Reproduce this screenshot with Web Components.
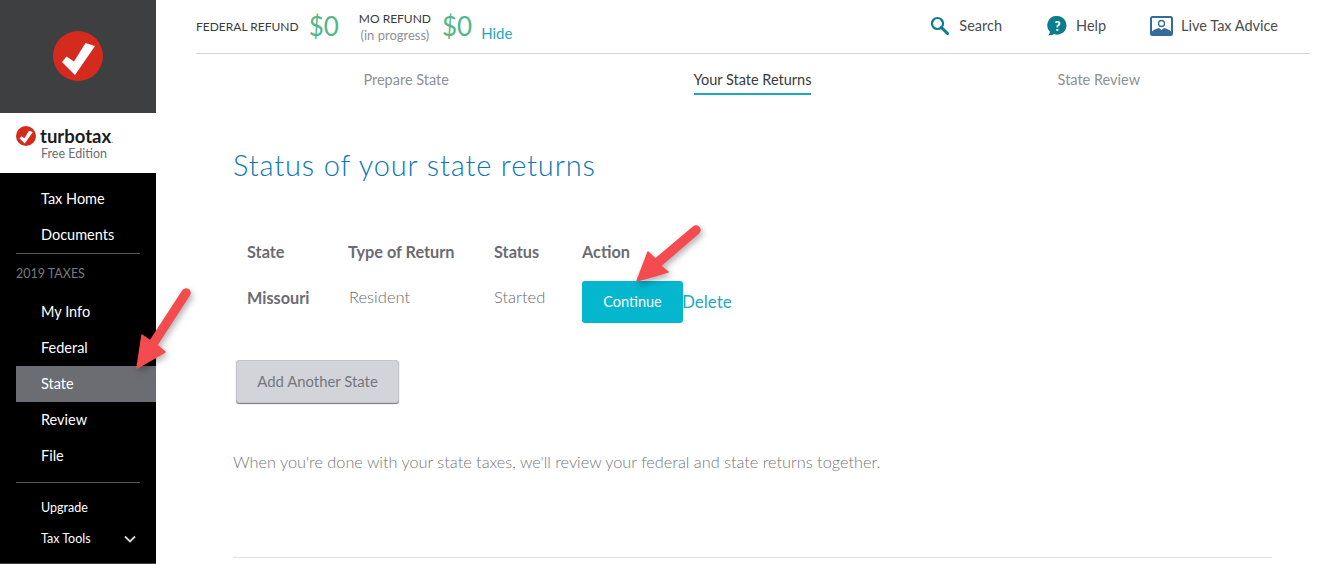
<!DOCTYPE html>
<html>
<head>
<meta charset="utf-8">
<title>Status of your state returns</title>
<style>
  html, body { margin: 0; height: 100%; background: #fff; overflow: hidden; }
  body { font-family: Lato, "Open Sans", sans-serif; }
</style>
</head>
<body>
<tt-app></tt-app>
<script>
const CHECK = `<circle cx="25" cy="25" r="25" fill="#d52b1e"/><path d="M9 31l4.500-5.500L21 30.500 32.500 12l9.500 3L22 44z" fill="#fff"/>`;

class TtNavItem extends HTMLElement {
  constructor() {
    super();
    this.attachShadow({ mode: "open" });
    this.shadowRoot.innerHTML = `
      <style>
        :host { display: flex; align-items: center; box-sizing: border-box; height: 36px; margin-left: 16px; padding: 0 0 2px 25px;
          color: #fff; font-size: 14.500px; }
        :host([active]) { background: #6b6d72; }
        :host([small]) { font-size: 12.500px; height: 31px; padding-bottom: 0; }
      </style>
      <slot></slot>`;
  }
}

class TtSidebar extends HTMLElement {
  constructor() {
    super();
    this.attachShadow({ mode: "open" });
    this.shadowRoot.innerHTML = `
      <style>
        :host { display: flex; flex-direction: column; width: 156px; height: 564px; box-sizing: border-box; flex: none; background: #000; border-bottom: 1px solid #3d3f41; }
        .mark { height: 113px; background: #3d3f41; display: flex; align-items: center; justify-content: center; }
        .mark svg { width: 50px; height: 50px; margin-top: -1px; }
        .brand { height: 60px; background: #fff; padding: 12px 0 0 16px; box-sizing: border-box; }
        .logo { display: flex; align-items: center; gap: 4px; height: 21px; }
        .logo svg { width: 20px; height: 20px; }
        .word { font-size: 18.500px; font-weight: 700; color: #1c1c1c; }
        .edition { font-size: 12.500px; color: #6b6d72; margin: 1px 0 0 25px; line-height: 14px; }
        nav { padding-top: 8px; flex: 1; }
        hr { border: 0; height: 1px; background: #55575a; margin: 0 16px; }
        .year { font-size: 12.500px; color: #77797c; height: 39px; line-height: 39px; margin: 0 0 1px 16px; }
        .gap { height: 8px; }
        .gap.big { height: 9px; }
        .tools { display: flex; justify-content: space-between; align-items: center; width: 95px; }
      </style>
      <div class="mark"><svg viewBox="0 0 50 50">${CHECK}</svg></div>
      <div class="brand">
        <div class="logo"><svg viewBox="0 0 50 50">${CHECK}</svg><span class="word">turbotax<span style="font-weight:400;font-size:9px;color:#777">.</span></span></div>
        <p class="edition">Free Edition</p>
      </div>
      <nav>
        <tt-nav-item>Tax Home</tt-nav-item>
        <tt-nav-item>Documents</tt-nav-item>
        <hr>
        <div class="year">2019 TAXES</div>
        <tt-nav-item>My Info</tt-nav-item>
        <tt-nav-item>Federal</tt-nav-item>
        <tt-nav-item active>State</tt-nav-item>
        <tt-nav-item>Review</tt-nav-item>
        <tt-nav-item>File</tt-nav-item>
        <div class="gap"></div>
        <hr>
        <div class="gap big"></div>
        <tt-nav-item small>Upgrade</tt-nav-item>
        <tt-nav-item small><span class="tools">Tax Tools
          <svg viewBox="0 0 12 8" width="12" height="8"><path d="M1 1.500l5 5 5-5" fill="none" stroke="#d8d8d8" stroke-width="1.800"/></svg></span></tt-nav-item>
      </nav>`;
  }
}

class TtTopBar extends HTMLElement {
  constructor() {
    super();
    this.attachShadow({ mode: "open" });
    this.shadowRoot.innerHTML = `
      <style>
        :host { display: flex; align-items: center; height: 53px; border-bottom: 1px solid #d6d7d9; color: #4a4c4f; }
        .label { font-size: 12px; color: #393a3d; }
        .amt { font-size: 26px; color: #52b788; margin: -2px 0 0 10px; line-height: 1; }
        .mo { display: flex; flex-direction: column; align-items: center; margin-left: 20px; line-height: 17px; }
        .mo small { font-size: 13px; color: #8d9096; }
        .mo + .amt { margin-left: 11px; }
        .hide { font-size: 15px; color: #1fa8bd; margin: 12px 0 0 9px; }
        .tools { margin: -2px 0 0 auto; display: flex; align-items: center; padding-right: 32px; font-size: 14.500px; }
        .tool { display: flex; align-items: center; gap: 10px; margin-left: 45px; }
      </style>
      <span class="label">FEDERAL REFUND</span><span class="amt">$0</span>
      <span class="mo"><span class="label">MO REFUND</span><small>(in progress)</small></span><span class="amt">$0</span>
      <span class="hide">Hide</span>
      <div class="tools">
        <span class="tool"><svg width="19" height="19" viewBox="0 0 19 19"><circle cx="7.500" cy="7.500" r="5.500" fill="none" stroke="#0b7d8c" stroke-width="2.200"/><path d="M11.500 11.500l6 6" stroke="#0b7d8c" stroke-width="3" stroke-linecap="round"/></svg>Search</span>
        <span class="tool" style="gap:9px"><svg width="20" height="20" viewBox="0 0 20 20"><path d="M10.500 0a9.300 9.300 0 1 1-3.300 18.100C5.500 19.300 3 19.500 1 19.500c1-.9 1.800-2.300 1.900-3.800A9.300 9.300 0 0 1 10.500 0z" fill="#0b7d8c"/><text x="10.500" y="14.500" text-anchor="middle" font-family="Lato" font-weight="900" font-size="13" fill="#fff">?</text></svg>Help</span>
        <span class="tool" style="gap:8px;margin-left:44px"><svg width="23" height="20" viewBox="0 0 23 20"><rect x="1" y="1" width="21" height="18" rx="1.500" fill="#fff" stroke="#356a9a" stroke-width="2"/><circle cx="11.500" cy="7.500" r="3" fill="none" stroke="#356a9a" stroke-width="1.300"/><path d="M2 19v-3.500c2-2.500 5-2.500 7-3.500l2.500 2 2.500-2c2 1 5 1 7 3.500V19z" fill="#356a9a"/></svg>Live Tax Advice</span>
      </div>`;
  }
}

class TtTabs extends HTMLElement {
  constructor() {
    super();
    this.attachShadow({ mode: "open" });
    this.shadowRoot.innerHTML = `
      <style>
        :host { display: grid; grid-template-columns: repeat(3, 1fr); height: 41px; margin: 0 38px 0 37px; font-size: 14.500px; color: #8d9096; }
        div { text-align: center; }
        span { display: inline-block; padding-top: 16px; line-height: 20px; height: 23px; }
        .on { color: #393a3d; border-bottom: 2px solid #1fa8bd; }
      </style>
      <div><span>Prepare State</span></div>
      <div><span class="on">Your State Returns</span></div>
      <div><span>State Review</span></div>`;
  }
}

class TtReturns extends HTMLElement {
  constructor() {
    super();
    this.attachShadow({ mode: "open" });
    this.shadowRoot.innerHTML = `
      <style>
        :host { display: block; margin: 0 38px 0 37px; color: #6b6c72; }
        h1 { margin: 0; padding-top: 48px; height: 44px; line-height: 44px; font-size: 29px; font-weight: 300; color: #0d77b3; letter-spacing: .85px; }
        .grid { display: grid; grid-template-columns: 101px 146px 88px auto; justify-content: start; margin: 51px 0 0 14px; font-size: 16.300px; align-items: center; }
        .h { font-weight: 700; height: 40px; padding-top: 3px; line-height: 22px; }
        .s { font-weight: 700; margin-top: -10px; }
        .l { font-weight: 300; margin-top: -10px; font-size: 16.500px; }
        .l.r { margin-left: 1px; }
        .act { display: flex; align-items: center; }
        .cont { width: 101px; height: 42px; box-sizing: border-box; padding-bottom: 2px; background: #04b6ce; color: #fff; border-radius: 3px; display: flex; align-items: center; justify-content: center; font-size: 14.500px; }
        .del { color: #1fa8bd; font-size: 17px; margin: -2px 0 0 -1px; }
        .add { display: flex; align-items: center; justify-content: center; width: 163px; height: 43px; box-sizing: border-box; margin: 37px 0 0 3px; padding-bottom: 2px;
          background: #d2d4da; color: #75767c; font-size: 14.900px; border-radius: 3px; box-shadow: 0 1px 1px #75767c; border: 1px solid #c4c6cc; }
        p { margin: 48px 0 0; font-size: 16.300px; font-weight: 300; color: #75767c; line-height: 22px; }
        hr { border: 0; height: 1px; background: #e0e1e3; margin: 84px 0 0; }
      </style>
      <h1>Status of your state returns</h1>
      <div class="grid">
        <div class="h">State</div><div class="h">Type of Return</div><div class="h">Status</div><div class="h">Action</div>
        <div class="s">Missouri</div><div class="l r">Resident</div><div class="l">Started</div>
        <div class="act"><span class="cont">Continue</span><span class="del">Delete</span></div>
      </div>
      <div class="add">Add Another State</div>
      <p>When you're done with your state taxes, we'll review your federal and state returns together.</p>
      <hr>`;
  }
}

class TtArrow extends HTMLElement {
  constructor() {
    super();
    this.attachShadow({ mode: "open" });
    const d = this.getAttribute("d");
    this.shadowRoot.innerHTML = `
      <style>
        :host { position: absolute; display: block; left: var(--x); top: var(--y); width: 70px; height: 90px; }
        svg { overflow: visible; filter: drop-shadow(2px 3px 3px rgba(0,0,0,.3)); }
      </style>
      <svg width="70" height="90" viewBox="0 0 70 90"><path d="${d}" fill="#f44b4f" stroke="#f44b4f" stroke-width="1.500" stroke-linejoin="round"/></svg>`;
  }
}

class TtApp extends HTMLElement {
  constructor() {
    super();
    this.attachShadow({ mode: "open" });
    this.shadowRoot.innerHTML = `
      <style>
        :host { display: flex; position: relative; width: 1333px; height: 564px; overflow: hidden; }
        main { flex: 1; min-width: 0; padding: 0 23px 0 40px; }
        .a1 { --x: 128px; --y: 286px; }
        .a2 { --x: 630px; --y: 224px; }
      </style>
      <tt-sidebar></tt-sidebar>
      <main>
        <tt-top-bar></tt-top-bar>
        <tt-tabs></tt-tabs>
        <tt-returns></tt-returns>
      </main>
      <tt-arrow class="a1" d="M54.700 4.800L22.200 54.800 14 49l-5 33 28-16-8.200-6.800L61.300 9.200a3.900 3.900 0 0 0-6.600-4.400z"></tt-arrow>
      <tt-arrow class="a2" d="M63.400 3L25.400 35 18 28 7 57l31-9-7.400-6.300L68.600 9a3.900 3.900 0 0 0-5.200-6z"></tt-arrow>`;
  }
}

customElements.define("tt-nav-item", TtNavItem);
customElements.define("tt-sidebar", TtSidebar);
customElements.define("tt-top-bar", TtTopBar);
customElements.define("tt-tabs", TtTabs);
customElements.define("tt-returns", TtReturns);
customElements.define("tt-arrow", TtArrow);
customElements.define("tt-app", TtApp);
</script>
</body>
</html>
